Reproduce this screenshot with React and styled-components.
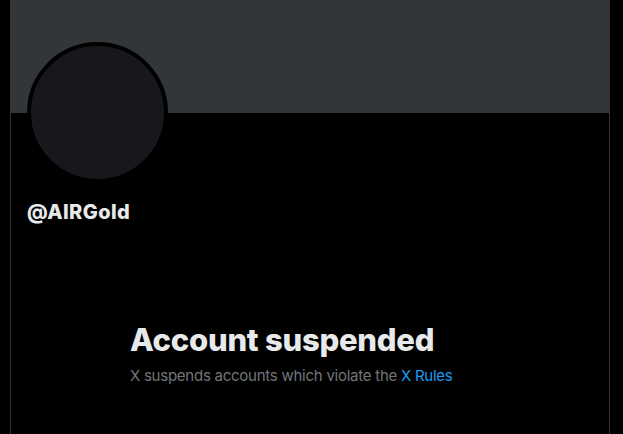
import React from "react";
import styled, { createGlobalStyle } from "styled-components";

const Global = createGlobalStyle`
  html, body { margin: 0; padding: 0; background: #000; }
  body { font-family: Inter, "Noto Sans", "Liberation Sans", sans-serif; color: #e7e9ea; }
  #root { min-height: 100vh; }
`;

const Page = styled.div`
  display: flex;
  padding-left: 10px;
  min-height: 100vh;
`;

const Column = styled.main`
  width: 598px;
  min-height: 100vh;
  border-left: 1px solid #2f3336;
  border-right: 1px solid #2f3336;
  display: flex;
  flex-direction: column;
`;

const Banner = styled.div`
  height: 113px;
  background: #333639;
`;

const ProfileHead = styled.div`
  display: flex;
  flex-direction: column;
  padding: 0 16px;
`;

const Avatar = styled.div`
  width: 133px;
  height: 133px;
  margin-top: -71px;
  border-radius: 50%;
  border: 4px solid #000;
  background: #16181c;
`;

const Handle = styled.div`
  margin-top: 17px;
  font-size: 20px;
  line-height: 24px;
  font-weight: 800;
  color: #e7e9ea;
  letter-spacing: 0.4px;
`;

const Empty = styled.section`
  width: 360px;
  margin: 98px auto 0;
  display: flex;
  flex-direction: column;
  gap: 8px;
`;

const Title = styled.h1`
  margin: 0;
  font-size: 31px;
  line-height: 36px;
  font-weight: 800;
  letter-spacing: -0.25px;
  color: #e7e9ea;
`;

const Sub = styled.p`
  margin: 0;
  font-size: 15px;
  line-height: 20px;
  letter-spacing: -0.25px;
  color: #71767b;
`;

const Link = styled.a`
  color: #1d9bf0;
  text-decoration: none;
`;

export default function App() {
  return (
    <>
      <Global />
      <Page>
        <Column>
          <Banner />
          <ProfileHead>
            <Avatar />
            <Handle>@AIRGold</Handle>
          </ProfileHead>
          <Empty>
            <Title>Account suspended</Title>
            <Sub>
              X suspends accounts which violate the <Link href="#">X Rules</Link>
            </Sub>
          </Empty>
        </Column>
      </Page>
    </>
  );
}
